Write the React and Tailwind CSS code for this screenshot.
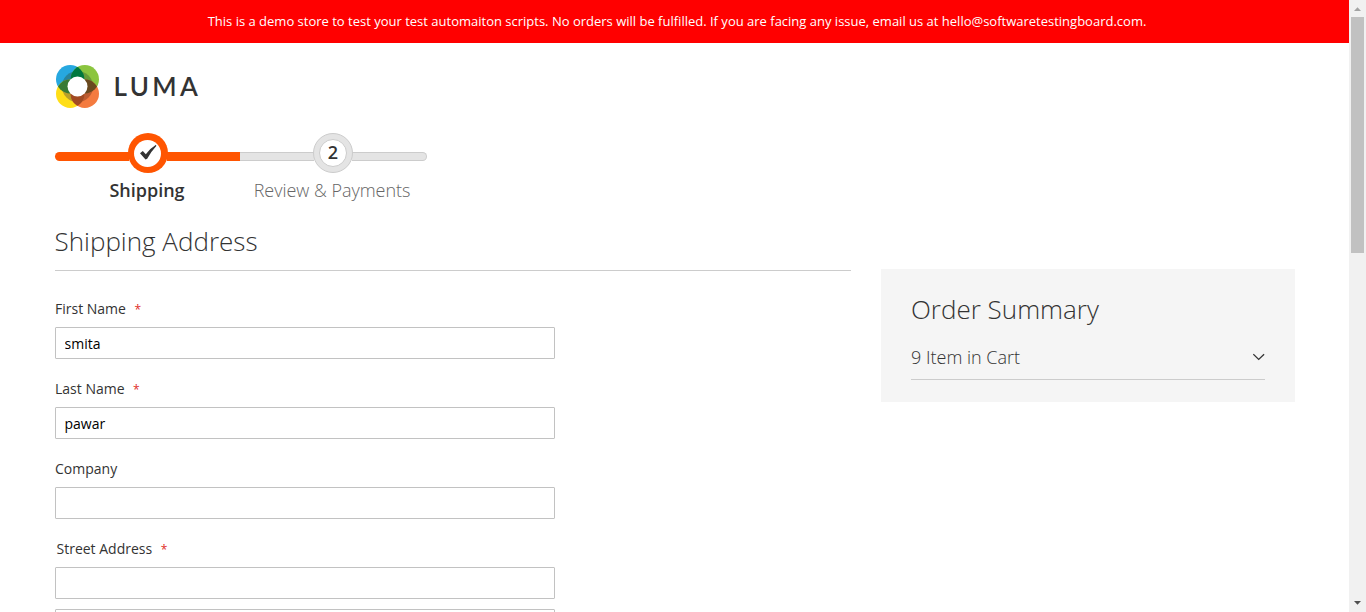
import React from "react";

function Logo() {
  return (
    <div className="flex h-[43px] items-center">
      <svg className="size-[43px] shrink-0" viewBox="0 0 43 43">
        <g>
          <circle cx="14.2" cy="14.2" r="14.2" fill="#27a8e0" />
          <circle cx="28.8" cy="14.2" r="14.2" fill="#8bc53f" />
          <circle cx="14.2" cy="28.8" r="14.2" fill="#ffde17" />
          <circle cx="28.8" cy="28.8" r="14.2" fill="#f47b3f" />
        </g>
        <defs>
          <clipPath id="tl"><circle cx="14.2" cy="14.2" r="14.2" /></clipPath>
          <clipPath id="tr"><circle cx="28.8" cy="14.2" r="14.2" /></clipPath>
          <clipPath id="bl"><circle cx="14.2" cy="28.8" r="14.2" /></clipPath>
          <clipPath id="ring"><circle cx="21.5" cy="21.5" r="15.6" /></clipPath>
        </defs>
        <g clipPath="url(#ring)">
          <circle cx="14.2" cy="14.2" r="14.2" fill="#28839a" />
          <circle cx="28.8" cy="14.2" r="14.2" fill="#689b38" />
          <circle cx="14.2" cy="28.8" r="14.2" fill="#b99f2a" />
          <circle cx="28.8" cy="28.8" r="14.2" fill="#bd5c30" />
        </g>
        <circle cx="28.8" cy="14.2" r="14.2" fill="#00783e" clipPath="url(#tl)" />
        <circle cx="14.2" cy="28.8" r="14.2" fill="#387a35" clipPath="url(#tl)" />
        <circle cx="28.8" cy="28.8" r="14.2" fill="#69491f" clipPath="url(#tr)" />
        <circle cx="28.8" cy="28.8" r="14.2" fill="#a24a22" clipPath="url(#bl)" />
        <circle cx="21.5" cy="21.5" r="10" fill="#fff" />
      </svg>
      <span className="ml-[14.5px] font-['Lato',sans-serif] text-[26px] leading-[43px] font-semibold tracking-[3.4px] text-[#333]">LUMA</span>
    </div>
  );
}

function Field({ label, required, value, indent }) {
  return (
    <div className="h-20">
      <div className={"flex h-7 items-start text-sm leading-5 " + (indent ? "pl-[1.5px]" : "pl-0")}>
        <span>{label}</span>
        {required && <span className="ml-[8.5px] pt-px text-xs leading-5 text-[#e02b27]">*</span>}
      </div>
      <input
        defaultValue={value}
        className="block h-8 w-[500px] rounded-[1px] border border-[#c2c2c2] bg-white px-[8.5px] text-sm text-black outline-none"
      />
    </div>
  );
}

function Progress() {
  return (
    <ol className="flex h-[70px] text-lg leading-[25px]">
      <li className="flex w-[185px] flex-col items-center">
        <div className="flex h-10 w-full items-center">
          <div className="mt-[7px] h-[9px] flex-1 rounded-l-[6px] bg-[#ff5501]" />
          <div className="-mx-px flex size-10 items-center justify-center rounded-full bg-[#ff5501]">
            <div className="flex size-[27px] items-center justify-center rounded-full bg-white">
              <svg className="size-[18px]" viewBox="0 0 18 18">
                <path d="M1 9.2 3.8 7 6.8 10.3 Q10.5 4.8 17 .8 L17.3 1.9 Q12 7.5 8.2 14.8 L6.5 15.4 Z" fill="#333" />
              </svg>
            </div>
          </div>
          <div className="mt-[7px] h-[9px] flex-1 bg-[#ff5501]" />
        </div>
        <span className="mt-[5px] pr-px font-semibold">Shipping</span>
      </li>
      <li className="flex w-[187px] flex-col items-center">
        <div className="flex h-10 w-full items-center">
          <div className="mt-[7px] h-[9px] flex-1 border-y border-[#ccc] bg-[#e4e4e4]" />
          <div className="z-10 -mx-px flex size-10 items-center justify-center rounded-full border border-[#ccc] bg-[#e4e4e4]">
            <div className="flex size-7 items-center justify-center rounded-full border border-[#ccc] bg-white pb-0.5 font-semibold">2</div>
          </div>
          <div className="mt-[7px] h-[9px] flex-1 rounded-r-[6px] border-y border-r border-[#ccc] bg-[#e4e4e4]" />
        </div>
        <span className="mt-[5px] pr-[3px] font-light tracking-[-0.03px] text-[#666]">Review &amp; Payments</span>
      </li>
    </ol>
  );
}

export default function App() {
  return (
    <div className="flex h-[612px] overflow-hidden bg-white font-['Open_Sans',sans-serif] text-[#333]">
      <div className="h-full w-[1349px]">
        <div className="flex h-[43px] items-center justify-center bg-[#f00] pl-[5px] text-[13px] whitespace-nowrap text-white">
          This is a demo store to test your test automaiton scripts. No orders will be fulfilled. If you are facing any issue, email us at hello@softwaretestingboard.com.
        </div>
        <div className="flex flex-col pt-[22px] pl-[55px]">
          <div className="pl-px"><Logo /></div>
          <div className="mt-[25px]"><Progress /></div>
          <div className="flex items-start">
            <main className="w-[796px] pt-6">
              <h1 className="h-[44px] border-b border-[#ccc] text-[26px] leading-[29px] font-light"><span className="-ml-[0.5px]">Shipping Address</span></h1>
              <form className="pt-7">
                <Field label="First Name" required value="smita" />
                <Field label="Last Name" required value="pawar" />
                <Field label="Company" value="" />
                <Field label="Street Address" required value="" indent />
                <input
                  aria-label="Street Address line 2"
                  className="-mt-[10px] block h-8 w-[500px] rounded-[1px] border border-[#c2c2c2] bg-white px-[9px] text-sm text-black outline-none"
                />
              </form>
            </main>
            <aside className="mt-[66px] ml-[30px] h-[133px] w-[414px] bg-[#f5f5f5] px-[30px] pt-[26px]">
              <h2 className="text-[26px] leading-[29px] font-light">Order Summary</h2>
              <div className="mt-[11px] flex h-[45px] items-center justify-between border-b border-[#ccc] text-lg font-light">
                <span>9 Item in Cart</span>
                <svg className="size-3" viewBox="0 0 12 12" fill="none" stroke="#333" strokeWidth="1.3">
                  <path d="M.3 3.2 5.7 8.4l5.4-5.2" />
                </svg>
              </div>
            </aside>
          </div>
        </div>
      </div>
      <div className="flex h-full w-[17px] flex-col items-center bg-[#f1f1f1]">
        <svg className="h-[17px] w-[17px]" viewBox="0 0 17 17"><path d="M5 11 8.5 7.2 12 11Z" fill="#a3a3a3" /></svg>
        <div className="h-[236px] w-[13px] bg-[#c1c1c1]" />
        <svg className="mt-auto h-[17px] w-[17px]" viewBox="0 0 17 17"><path d="M5 6 8.5 9.8 12 6Z" fill="#505050" /></svg>
      </div>
    </div>
  );
}
